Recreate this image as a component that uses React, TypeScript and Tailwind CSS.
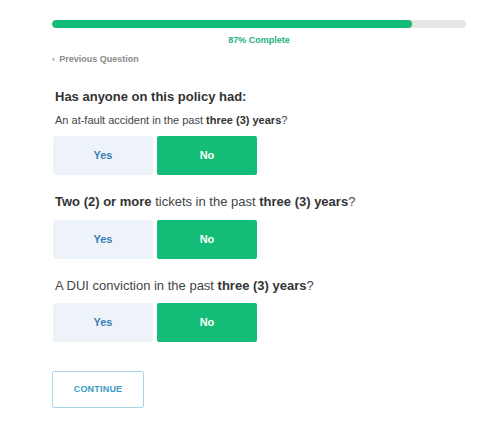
const font = { fontFamily: '"Liberation Sans", Arial, sans-serif' };

function Choice({ selected }: { selected: 'yes' | 'no' }) {
  return (
    <div className="flex gap-1 ml-px">
      <button
        className={`w-[100px] h-[39px] rounded-[2px] text-[11px] font-bold ${
          selected === 'yes' ? 'bg-[#13bd77] text-white' : 'bg-[#edf3f9] text-[#3b7db3]'
        }`}
      >
        Yes
      </button>
      <button
        className={`w-[100px] h-[39px] rounded-[2px] text-[11px] font-bold ${
          selected === 'no' ? 'bg-[#13bd77] text-white' : 'bg-[#edf3f9] text-[#3b7db3]'
        }`}
      >
        No
      </button>
    </div>
  );
}

export default function App() {
  return (
    <div className="w-[500px] h-[428px] bg-white text-[#333]" style={font}>
      <div className="w-[414px] ml-[52px] pt-[20px]">
        <div className="h-[8px] rounded-full bg-[#e6e6e6] overflow-hidden">
          <div className="h-full w-[87%] rounded-full bg-[#13bd77]"></div>
        </div>
        <p className="mt-[7px] text-center text-[9px] leading-[10px] font-bold text-[#22b27a]">
          87% Complete
        </p>
        <p className="mt-[9px] text-[9px] leading-[10px] font-bold text-[#8a8a8a]">
          <span className="mr-[2px] text-[8px]">‹</span> Previous Question
        </p>

        <h2 className="mt-[24px] ml-[3px] text-[13px] leading-[16px] font-bold text-[#333]">
          Has anyone on this policy had:
        </h2>
        <p className="mt-[8px] ml-[3px] text-[11px] leading-[14px] text-[#444]">
          An at-fault accident in the past <b className="text-[#333]">three (3) years</b>?
        </p>
        <div className="mt-[9px]">
          <Choice selected="no" />
        </div>

        <p className="mt-[19px] ml-[3px] text-[13px] leading-[16px] text-[#444]">
          <b className="text-[#333]">Two (2) or more</b> tickets in the past{' '}
          <b className="text-[#333]">three (3) years</b>?
        </p>
        <div className="mt-[10px]">
          <Choice selected="no" />
        </div>

        <p className="mt-[19px] ml-[3px] text-[13px] leading-[16px] text-[#444]">
          A DUI conviction in the past <b className="text-[#333]">three (3) years</b>?
        </p>
        <div className="mt-[9px]">
          <Choice selected="no" />
        </div>

        <button className="mt-[29px] w-[92px] h-[37px] rounded-[2px] border border-[#a9d6e8] bg-white text-[9px] font-bold text-[#3a9cc6] tracking-[0.2px]">
          CONTINUE
        </button>
      </div>
    </div>
  );
}
